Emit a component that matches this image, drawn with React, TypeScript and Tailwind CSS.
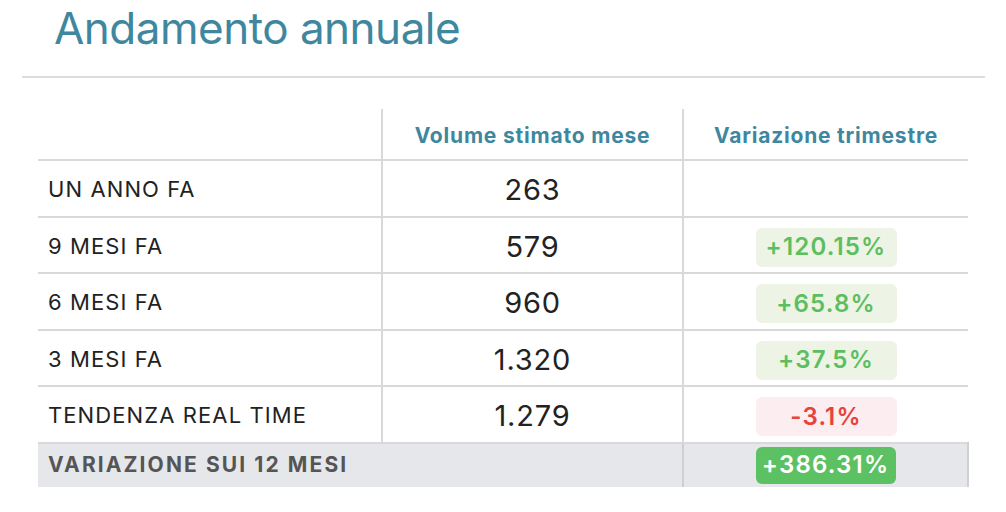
type Row = {
  label: string
  volume: string
  change?: string
  tone?: 'up' | 'down'
}

const rows: Row[] = [
  { label: 'UN ANNO FA', volume: '263' },
  { label: '9 MESI FA', volume: '579', change: '+120.15%', tone: 'up' },
  { label: '6 MESI FA', volume: '960', change: '+65.8%', tone: 'up' },
  { label: '3 MESI FA', volume: '1.320', change: '+37.5%', tone: 'up' },
  { label: 'TENDENZA REAL TIME', volume: '1.279', change: '-3.1%', tone: 'down' },
]

function Badge({ value, tone }: { value: string; tone?: 'up' | 'down' }) {
  const cls =
    tone === 'down'
      ? 'bg-[#fcedf0] text-[#e5433c]'
      : 'bg-[#edf3e5] text-[#5bbf60]'
  return (
    <span
      className={`inline-flex h-[39px] w-[141px] items-center justify-center rounded-[6px] text-[24px] font-semibold tracking-[1.2px] ${cls}`}
    >
      {value}
    </span>
  )
}

export default function App() {
  return (
    <div className="min-h-[512px] w-[1006px] bg-white font-['Inter',sans-serif] text-[#222]">
      {/* Title */}
      <h1 className="pl-[54px] pt-[2px] text-[44px] leading-[52px] font-normal tracking-[-0.5px] text-[#3e879e]">
        Andamento annuale
      </h1>
      <div className="ml-[22px] mt-[22px] h-[2px] w-[963px] bg-[#dcdcdc]" />

      {/* Table */}
      <table className="ml-[38px] mt-[31px] w-[930px] border-collapse table-fixed">
        <colgroup>
          <col className="w-[344px]" />
          <col className="w-[301px]" />
          <col className="w-[285px]" />
        </colgroup>
        <thead>
          <tr className="h-[51px] border-b-2 border-[#d9d9d9]">
            <th className="border-r-2 border-[#d9d9d9]" />
            <th className="border-r-2 border-[#d9d9d9] pt-[4px] text-center text-[21px] font-bold tracking-[0.8px] text-[#3e879e]">
              Volume stimato mese
            </th>
            <th className="pt-[4px] text-center text-[21px] font-bold tracking-[0.8px] text-[#3e879e]">
              Variazione trimestre
            </th>
          </tr>
        </thead>
        <tbody>
          {rows.map((r) => (
            <tr key={r.label} className="h-[56.5px] border-b-2 border-[#d9d9d9]">
              <td className="border-r-2 border-[#d9d9d9] pl-[10px] pt-[3px] text-[22px] tracking-[1.1px] text-[#222]">
                {r.label}
              </td>
              <td className="border-r-2 border-[#d9d9d9] pt-[3px] text-center text-[29px] tracking-[0.8px] text-[#222]">
                {r.volume}
              </td>
              <td className="pt-[5px] text-center">
                {r.change && <Badge value={r.change} tone={r.tone} />}
              </td>
            </tr>
          ))}
          <tr className="h-[44px] bg-[#e6e7ea]">
            <td
              colSpan={2}
              className="border-r-2 border-[#cfcfd2] pl-[10px] text-[21px] font-bold tracking-[2.1px] text-[#555]"
            >
              VARIAZIONE SUI 12 MESI
            </td>
            <td className="border-r-2 border-[#d0d0d3] text-center">
              <span className="inline-flex h-[37px] w-[140px] items-center justify-center rounded-[6px] bg-[#5cc163] text-[24px] font-semibold tracking-[1.2px] text-white">
                +386.31%
              </span>
            </td>
          </tr>
        </tbody>
      </table>
    </div>
  )
}
